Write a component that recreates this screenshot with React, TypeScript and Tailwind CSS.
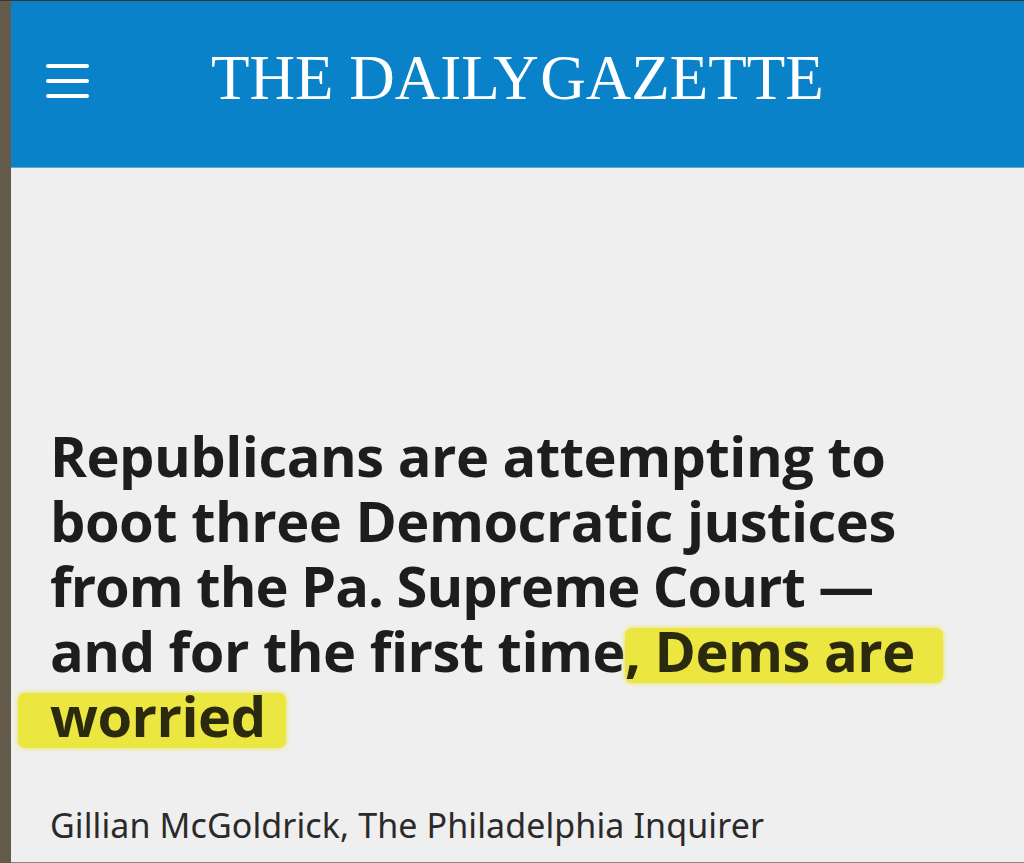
import React from 'react';

const headlineFont = { fontFamily: '"Open Sans", "Noto Sans", sans-serif' };
const mark = 'inline-block bg-[#ebe640] text-[#2c2a0e] rounded-[7px] leading-[45px] pb-[10px] shadow-[0_0_5px_#ebe640]';

export default function App() {
  return (
    <div className="w-[1024px] h-[863px] bg-[#2a2824] flex flex-col overflow-hidden">
      <div className="h-px bg-[#3a3530]" />
      <div className="flex flex-1 min-h-0">
        <div className="w-[11px] bg-[#655b4b]" />
        <div className="flex-1 flex flex-col bg-[#efefef]">
          <header className="h-[167px] bg-[#0a82c9] border-b border-[#6aa6cf] flex items-start">
            <div className="ml-[35px] mt-[63px] flex flex-col gap-[11px]">
              <span className="block w-[43px] h-[4px] rounded-full bg-white" />
              <span className="block w-[43px] h-[4px] rounded-full bg-white" />
              <span className="block w-[43px] h-[4px] rounded-full bg-white" />
            </div>
            <div
              className="ml-[122px] mt-[46px] text-white text-[63px] leading-none whitespace-nowrap"
              style={{ fontFamily: '"Liberation Serif", "Times New Roman", serif' }}
            >
              THE DAILY <span className="ml-[-12px]">GAZETTE</span>
            </div>
          </header>
          <main className="flex-1 flex flex-col px-[39px] pt-[255px]">
            <h1
              className="text-[#1d1d1d] text-[56px] font-bold leading-[65px] tracking-[-0.5px]"
              style={headlineFont}
            >
              <div>Republicans are attempting to</div>
              <div>boot three Democratic justices</div>
              <div className="tracking-[-1px]">from the Pa. Supreme Court —</div>
              <div className="whitespace-nowrap">
                and for the first time<span className={`${mark} pr-[28px]`}>, Dems are</span>
              </div>
              <div>
                <span className={`${mark} ml-[-32px] pl-[32px] pr-[20px]`}>worried</span>
              </div>
            </h1>
            <p
              className="mt-[57px] text-[#2a2a2a] text-[34px] leading-[40px] tracking-[0.1px]"
              style={{ fontFamily: '"Noto Sans", "Open Sans", sans-serif' }}
            >
              Gillian McGoldrick, The Philadelphia Inquirer
            </p>
          </main>
          <div className="h-px bg-[#8a8478]" />
        </div>
      </div>
    </div>
  );
}
